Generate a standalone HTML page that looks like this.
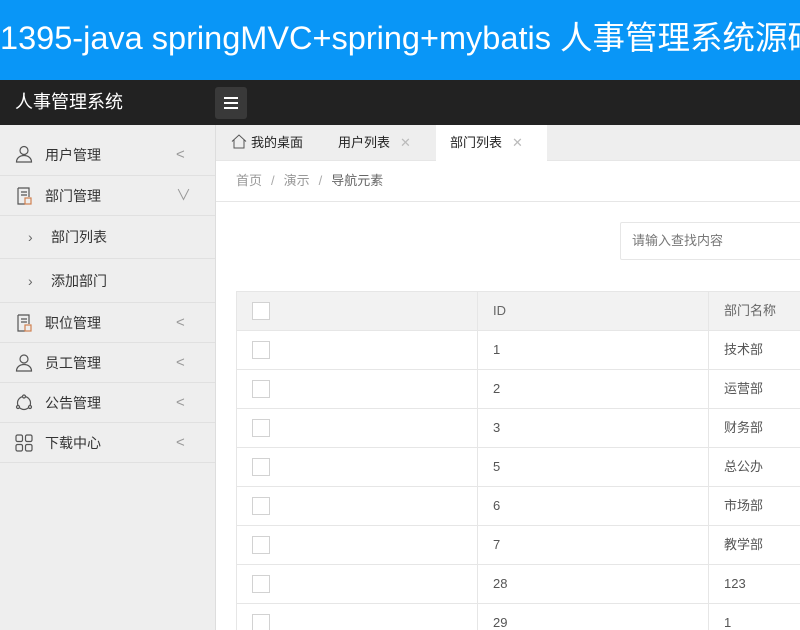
<!DOCTYPE html><html><head><meta charset="utf-8"><style>
*{margin:0;padding:0;box-sizing:border-box}
html,body{width:800px;height:630px;overflow:hidden}
body{font-family:"Liberation Sans","Noto Sans CJK SC",sans-serif;font-size:14px;color:#333;background:#fff;position:relative}
.banner{position:absolute;left:0;top:0;width:800px;height:80px;background:#0996f7;color:#fff;font-size:32.5px;line-height:76px;white-space:nowrap;overflow:hidden;padding-left:0}
.hdr{position:absolute;top:80px;left:0;width:800px;height:45px;background:#222}
.hdr .t{position:absolute;left:15px;top:0;line-height:44px;color:#fff;font-size:18px}
.hdr .b{position:absolute;left:215px;top:7px;width:32px;height:32px;background:#393939;border-radius:3px}
.hdr .b i{position:absolute;left:9px;width:14px;height:2px;background:#fff}
.side{position:absolute;left:0;top:125px;width:216px;height:505px;background:#eee;border-right:1px solid #ddd}
.it{position:absolute;left:0;width:215px;border-bottom:1px solid #e0e0e0;color:#333}
.it span{position:absolute;left:45px}
.it .ar{position:absolute;left:176px;color:#999;font-size:15px}
.it svg{position:absolute;left:15px}
.tabs{position:absolute;left:216px;top:125px;width:584px;height:36px;background:#eee;border-bottom:1px solid #e6e6e6}
.tab{position:absolute;top:0;height:36px;line-height:36px;font-size:13px;color:#222}
.tab .x{color:#bbb;margin-left:10px;font-size:13px}
.crumb{position:absolute;left:216px;top:161px;width:584px;height:41px;border-bottom:1px solid #e6e6e6;line-height:40px;padding-left:20px;color:#999;font-size:13px}
.crumb b{font-weight:normal;margin:0 9px;color:#aaa}
.search{position:absolute;left:620px;top:222px;width:200px;height:38px;border:1px solid #e6e6e6;border-radius:2px;line-height:36px;padding-left:11px;color:#777;font-size:13px}
table{position:absolute;left:236px;top:291px;border-collapse:collapse;width:600px}
td{height:39px;border:1px solid #e6e6e6;padding-left:15px;font-size:13px;color:#555;line-height:16px}
tr.h td{background:#f2f2f2;color:#666}
.cb{display:inline-block;width:18px;height:18px;border:1px solid #d2d2d2;background:#fff;vertical-align:middle}
</style></head><body>
<div class="banner">1395-java springMVC+spring+mybatis 人事管理系统源码</div>
<div class="hdr"><div class="t">人事管理系统</div><div class="b"><i style="top:10px"></i><i style="top:15px"></i><i style="top:20px"></i></div></div>
<div class="side">
<div class="it" style="top:10px;height:41px;line-height:40px"><svg width="18" height="18" style="top:10px" viewBox="0 0 18 18" fill="none" stroke="#555" stroke-width="1.2"><circle cx="9" cy="5.5" r="4"/><path d="M1.5 17c0-4 3.5-6.5 7.5-6.5s7.5 2.5 7.5 6.5z"/></svg><span>用户管理</span><span class="ar" style="left:176px">&lt;</span></div>
<div class="it" style="top:51px;height:40px;line-height:40px"><svg width="18" height="18" style="top:11px" viewBox="0 0 18 18" fill="none" stroke="#555" stroke-width="1.2"><path d="M3 1h11v9M3 1v16h7"/><path d="M6 5h6M6 8h6"/><rect x="10" y="11" width="6" height="6" stroke="#d08050"/></svg><span>部门管理</span><span class="ar">&#8744;</span></div>
<div class="it" style="top:91px;height:43px;line-height:42px"><span style="left:28px;color:#666">&rsaquo;</span><span style="left:51px">部门列表</span></div>
<div class="it" style="top:134px;height:44px;line-height:44px"><span style="left:28px;color:#666">&rsaquo;</span><span style="left:51px">添加部门</span></div>
<div class="it" style="top:178px;height:40px;line-height:40px"><svg width="18" height="18" style="top:11px" viewBox="0 0 18 18" fill="none" stroke="#555" stroke-width="1.2"><path d="M3 1h11v9M3 1v16h7"/><path d="M6 5h6M6 8h6"/><rect x="10" y="11" width="6" height="6" stroke="#d08050"/></svg><span>职位管理</span><span class="ar">&lt;</span></div>
<div class="it" style="top:218px;height:40px;line-height:40px"><svg width="18" height="18" style="top:11px" viewBox="0 0 18 18" fill="none" stroke="#555" stroke-width="1.2"><circle cx="9" cy="5" r="4"/><path d="M1.5 17c0-4 3.5-6.5 7.5-6.5s7.5 2.5 7.5 6.5z"/></svg><span>员工管理</span><span class="ar">&lt;</span></div>
<div class="it" style="top:258px;height:40px;line-height:40px"><svg width="18" height="18" style="top:11px" viewBox="0 0 18 18" fill="none" stroke="#555" stroke-width="1.2"><circle cx="9" cy="9" r="6.5"/><circle cx="9" cy="2.5" r="1.5" fill="#eee"/><circle cx="3" cy="13" r="1.5" fill="#eee"/><circle cx="15" cy="13" r="1.5" fill="#eee"/></svg><span>公告管理</span><span class="ar">&lt;</span></div>
<div class="it" style="top:298px;height:40px;line-height:40px"><svg width="18" height="18" style="top:11px" viewBox="0 0 18 18" fill="none" stroke="#555" stroke-width="1.2"><rect x="1" y="1" width="6.5" height="6.5" rx="1.5"/><rect x="10.5" y="1" width="6.5" height="6.5" rx="1.5"/><rect x="1" y="10.5" width="6.5" height="6.5" rx="1.5"/><rect x="10.5" y="10.5" width="6.5" height="6.5" rx="1.5"/></svg><span>下载中心</span><span class="ar">&lt;</span></div>
</div>
<div class="tabs">
<div class="tab" style="left:15px"><svg width="16" height="15" viewBox="0 0 16 15" fill="none" stroke="#555" stroke-width="1" style="vertical-align:-2px;margin-right:4px"><path d="M1 7.5L8 1l7 6.5M3 6v8h10V6"/></svg>我的桌面</div>
<div class="tab" style="left:122px">用户列表<span class="x">✕</span></div>
<div class="tab" style="left:220px;width:111px;background:#fff;padding-left:14px;height:37px">部门列表<span class="x">✕</span></div>
</div>
<div class="crumb">首页<b>/</b>演示<b>/</b><span style="color:#666">导航元素</span></div>
<div class="search">请输入查找内容</div>
<table>
<tr class="h"><td style="width:241px"><span class="cb"></span></td><td style="width:231px">ID</td><td>部门名称</td></tr>
<tr><td><span class="cb"></span></td><td>1</td><td>技术部</td></tr>
<tr><td><span class="cb"></span></td><td>2</td><td>运营部</td></tr>
<tr><td><span class="cb"></span></td><td>3</td><td>财务部</td></tr>
<tr><td><span class="cb"></span></td><td>5</td><td>总公办</td></tr>
<tr><td><span class="cb"></span></td><td>6</td><td>市场部</td></tr>
<tr><td><span class="cb"></span></td><td>7</td><td>教学部</td></tr>
<tr><td><span class="cb"></span></td><td>28</td><td>123</td></tr>
<tr><td><span class="cb"></span></td><td>29</td><td>1</td></tr>
</table>
</body></html>
